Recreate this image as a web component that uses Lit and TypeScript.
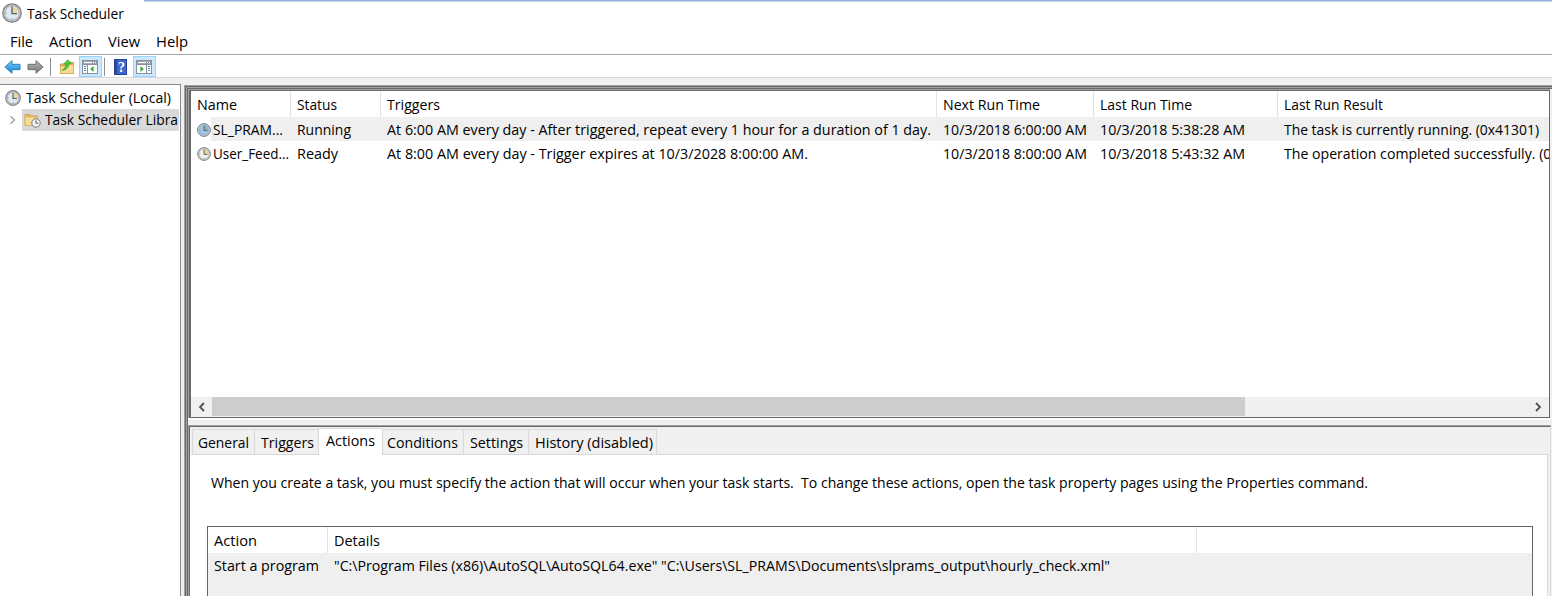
import { LitElement, html, css } from "lit";
import { customElement, property } from "lit/decorators.js";

/** Single-line label whose glyphs are condensed to a given advance width. */
@customElement("ui-label")
class UiLabel extends LitElement {
  @property({ type: Number }) w = 0;
  @property() text = "";
  static styles = css`
    :host { display: block; white-space: pre; height: 20px; line-height: 20px; flex: none; }
    .t { display: inline-block; transform-origin: 0 50%; }
  `;
  updated() {
    const t = this.renderRoot.querySelector(".t") as HTMLElement;
    t.style.transform = "none";
    const n = t.getBoundingClientRect().width;
    if (n && this.w) t.style.transform = `scaleX(${this.w / n})`;
  }
  render() {
    return html`<span class="t">${this.text}</span>`;
  }
}

const L = (text: string, w: number) => html`<ui-label .text=${text} .w=${w} style="width:${w}px"></ui-label>`;

const clock = (size: number, face = "#dfe9ef", rim = "#808285", wedge = "#ecd6a2") => html`
  <svg width=${size} height=${size} viewBox="0 0 20 20">
    <circle cx="10" cy="10" r="9.2" fill="#c6c8ca" stroke=${rim} stroke-width="1.3" />
    <circle cx="10" cy="10" r="7.2" fill=${face} stroke="#a3a8ac" stroke-width=".8" />
    <path d="M10 10V3.4A6.6 6.6 0 0 1 16.6 10Z" fill=${wedge} />
    <path d="M10 3.6V10.6H15" fill="none" stroke="#5a636b" stroke-width="1.4" />
    <path d="M10 15.2v1.4M3.5 10h1.4" stroke="#8b959c" stroke-width="1" />
  </svg>`;

const arrow = (flip: boolean, a: string, b: string, edge: string) => html`
  <svg width="17" height="16" viewBox="0 0 17 16">
    <defs>
      <linearGradient id=${flip ? "gr" : "gb"} x1="0" y1="0" x2="0" y2="1">
        <stop offset="0" stop-color=${a} /><stop offset="1" stop-color=${b} />
      </linearGradient>
    </defs>
    <path transform=${flip ? "translate(17 0) scale(-1 1)" : ""}
      d="M.9 8 8 1.700V5.300H16V10.700H8V14.300Z" fill=${`url(#${flip ? "gr" : "gb"})`} stroke=${edge} stroke-linejoin="round" />
  </svg>`;

const folderUp = html`
  <svg width="16" height="16" viewBox="0 0 16 16">
    <path d="M1.500 5H8l1-1.500H14.500V14.500H1.500Z" fill="#dcb862" stroke="#c9a14c" />
    <path d="M1.500 7H9l1.500-1.500H14.500V14.500H1.500Z" fill="#f4dc92" stroke="#d3ad58" stroke-width=".8" />
    <path d="M3 11.500C5.500 10 6.800 8 7 5H4.800L8.800 .800 12.300 4.600H10C9.800 8 7.500 11 3 11.500Z" fill="#55c63c" stroke="#36a029" stroke-width=".7" />
  </svg>`;

const paneIcon = (right: boolean) => html`
  <svg width="17" height="16" viewBox="0 0 17 16" shape-rendering="crispEdges">
    <rect x=".5" y="1.500" width="15" height="13" fill="#fff" stroke="#8a8f99" />
    <rect x="1" y="2" width="14" height="1" fill="#a3a8b0" />
    <path d="M1 3.500H15" stroke="#8a8f99" /><path d="M2 3.500H10M11 3.500h1M13 3.500h1" stroke="#fff" />
    <path d="M1 4.500H15" stroke="#a3a8b0" /><path d="M1 5.500H15" stroke="#8a8f99" />
    <path d=${right ? "M10.5 6V14" : "M5.5 6V14"} stroke="#8a8f99" />
    <path d=${right ? "M12 7.500h2M12 9.500h2M12 11.500h2" : "M2 7.500h2M2 9.500h2M2 11.500h2"} stroke="#4a79b8" />
    <path shape-rendering="auto" d=${right ? "M4.500 7 7.800 10 4.500 13Z" : "M11.500 7 8.200 10 11.500 13Z"} fill="#2fa836" />
  </svg>`;

const helpIcon = html`
  <svg width="13" height="16" viewBox="0 0 13 16">
    <rect x=".5" y=".5" width="12" height="15" fill="#3f66c8" stroke="#24429b" />
    <rect x="1" y="1" width="2" height="14" fill="#2a48a5" />
    <text x="7.500" y="13" text-anchor="middle" font-family="Liberation Serif, serif" font-weight="700" font-size="14" fill="#fff">?</text>
  </svg>`;

const folderClock = html`
  <svg width="17" height="16" viewBox="0 0 17 16">
    <path d="M1 2.500H6l1.500 1.500H13.500V13.500H1Z" fill="#e2bd66" stroke="#cda451" />
    <path d="M1 5H13.500V13.500H1Z" fill="#f8dd95" stroke="#d8b25e" stroke-width=".8" />
    <circle cx="12" cy="11" r="4.200" fill="#f2f5f6" stroke="#777c80" />
    <path d="M12 8.300V11.300H14.300" fill="none" stroke="#555d63" />
  </svg>`;

const chevron = (d: string, color: string, sw: number) => html`
  <svg width="8" height="10" viewBox="0 0 8 10"><path d=${d} fill="none" stroke=${color} stroke-width=${sw} /></svg>`;

interface Task { icon: unknown; cells: [string, number][]; selected?: boolean }

const columns: [string, number][] = [
  ["Name", 40], ["Status", 40], ["Triggers", 53], ["Next Run Time", 97], ["Last Run Time", 92], ["Last Run Result", 99],
];
const tasks: Task[] = [
  {
    icon: clock(14, "#9cc8e6", "#5c7f9b", "#8fb3b4"),
    selected: true,
    cells: [["SL_PRAM...", 70], ["Running", 54], ["At 6:00 AM every day - After triggered, repeat every 1 hour for a duration of 1 day.", 544],
      ["10/3/2018 6:00:00 AM", 144], ["10/3/2018 5:38:28 AM", 145], ["The task is currently running. (0x41301)", 255]],
  },
  {
    icon: clock(14, "#f0f0ee", "#8a8580", "#edcf92"),
    cells: [["User_Feed...", 76], ["Ready", 41], ["At 8:00 AM every day - Trigger expires at 10/3/2028 8:00:00 AM.", 421],
      ["10/3/2018 8:00:00 AM", 144], ["10/3/2018 5:43:32 AM", 145], ["The operation completed successfully. (0x0)", 287]],
  },
];
const tabs: [string, number, string][] = [
  ["General", 51, "g"], ["Triggers", 53, "t"], ["Actions", 49, "a"], ["Conditions", 71, "c"], ["Settings", 53, "s"], ["History (disabled)", 118, "h"],
];

@customElement("app-root")
class AppRoot extends LitElement {
  static styles = css`
    :host { display: block; width: 1552px; height: 596px; overflow: hidden; background: #f0f0f0; color: #000;
      font: 14.5px/20px "Open Sans", "Noto Sans", sans-serif; }
    * { box-sizing: border-box; }
    svg { display: block; flex: none; }
    .app { display: flex; flex-direction: column; height: 596px; }
    .accent { height: 2px; margin-left: 144px; background: #c4d7ee; border-top: 1px solid #91b1da; }
    .chrome { background: #fff; flex: none; }
    .title { display: flex; height: 29px; padding: 1px 0 0 2px; gap: 5px; }
    .title ui-label { margin-top: 1px; }
    .menu { display: flex; height: 24px; padding: 1px 0 0 10px; gap: 16px; border-bottom: 1px solid #a5a5a5; }
    .toolbar { display: flex; align-items: center; height: 23px; padding: 1px 0 0 4px; border-bottom: 1px solid #d9d9d9; }
    .toolbar .fwd { margin-left: 6px; }
    .sep { width: 1px; height: 18px; background: #8d8d8d; }
    .sep.one { margin: 0 8px 0 6px; }
    .sep.two { margin: 0 9px 0 2px; }
    .on { display: flex; align-items: center; justify-content: center; width: 23px; height: 21px; background: #cce8ff; border: 1px solid #99d1ff; }
    .on.left { margin-left: 4px; }
    .on.right { margin-left: 6px; }
    .body { display: flex; flex: 1; min-height: 0; padding-top: 6px; }
    .tree { width: 181px; flex: none; background: #fff; border: 1px solid #828790; border-width: 1px 1px 0 0; padding-top: 3px; overflow: hidden; }
    .root { display: flex; align-items: center; gap: 5px; height: 20px; padding-left: 5px; }
    .node { display: flex; align-items: center; height: 22px; padding-left: 9px; margin-top: 1px; }
    .sel { display: flex; align-items: center; gap: 4px; margin-left: 5px; padding-left: 2px; width: 157px; height: 22px; background: #d9d9d9; overflow: hidden; }
    .main { display: flex; flex-direction: column; flex: 1; margin: 1px 0 0 3px; min-width: 0; }
    .edge { display: flex; flex-direction: column; flex: 1; min-height: 0; border: solid #a0a0a0; border-width: 1px 0 0 1px; }
    .edge.dark { border-color: #696969; }
    .upper { border: solid #a0a0a0; border-width: 1px 0 0 1px; width: 1362px; flex: none; }
    .tasks { display: flex; flex-direction: column; height: 328px; background: #fff; border: solid #696969; border-width: 1px 1px 1px 2px; overflow: hidden; }
    .row { display: grid; grid-template-columns: 100px 90px 556px 157px 184px 400px; height: 24px; flex: none; }
    .cell { display: flex; overflow: hidden; padding: 3px 0 0 6px; min-width: 0; }
    .head { height: 26px; }
    .head .cell { border-right: 1px solid #e2e2e2; padding-top: 4px; }
    .name { gap: 2px; align-items: flex-start; }
    .name svg { margin-top: 3px; }
    .selected { background: linear-gradient(90deg, #fff 20px, #efefef 20px); }
    .fill { flex: 1; }
    .scroll { display: flex; align-items: center; justify-content: space-between; height: 20px; flex: none; background: #f0f0f0; padding-right: 7px; }
    .lbtn { display: flex; align-items: center; justify-content: center; width: 21px; }
    .thumb { width: 1033px; height: 19px; background: #cdcdcd; margin: 0 auto 1px 0; }
    .gap { height: 7px; flex: none; background: linear-gradient(#fff 2px, #f0f0f0 2px); }
    .lower { display: flex; flex: 1; min-height: 0; width: 1363px; border: solid #a0a0a0; border-width: 1px 0 0 1px; }
    .details { display: flex; flex-direction: column; flex: 1; min-height: 0; border: solid #696969; border-width: 1px 1px 0 1px; border-right-color: #dcdcdc; }
    .tabs { display: flex; height: 28px; align-items: flex-end; padding-left: 2px; flex: none; }
    .tab { display: flex; height: 26px; padding-top: 3px; border: 1px solid #d9d9d9; border-left: 0; }
    .g { width: 63px; padding-left: 5px; border-left: 1px solid #d9d9d9; }
    .t { width: 63px; padding-left: 6px; border-right: 0; }
    .a { width: 65px; height: 27px; padding-top: 2px; padding-left: 7px; background: #fff; border-left: 1px solid #d9d9d9; border-bottom: 0; }
    .c { width: 81px; padding-left: 4px; }
    .s { width: 65px; padding-left: 6px; }
    .h { width: 128px; padding-left: 6px; }
    .rest { flex: 1; height: 1px; background: #d9d9d9; margin-right: 2px; }
    .page { flex: 1; min-height: 0; background: #fff; border-right: 1px solid #d9d9d9; margin-right: 2px; padding: 18px 14px 0 17px; }
    .note { padding-left: 4px; height: 53px; }
    .list { height: 80px; border: 1px solid #646464; background: #efefef; }
    .arow { display: grid; grid-template-columns: 120px 869px 1fr; height: 26px; }
    .arow.head { background: #fff; }
    .arow.head .cell:last-child { border-right: 0; }
  `;
  render() {
    return html`<div class="app">
      <div class="chrome">
        <div class="accent"></div>
        <div class="title">${clock(20)}${L("Task Scheduler", 97)}</div>
        <div class="menu">${L("File", 23)}${L("Action", 43)}${L("View", 32)}${L("Help", 32)}</div>
        <div class="toolbar">
          ${arrow(false, "#7fd0f6", "#0d7fd0", "#2b84bf")}
          <span class="fwd">${arrow(true, "#b5b5b5", "#777", "#6e6e6e")}</span>
          <span class="sep one"></span>${folderUp}
          <span class="on left">${paneIcon(false)}</span>
          <span class="sep two"></span>${helpIcon}
          <span class="on right">${paneIcon(true)}</span>
        </div>
      </div>
      <div class="body">
        <div class="tree">
          <div class="root">${clock(16)}${L("Task Scheduler (Local)", 145)}</div>
          <div class="node">${chevron("M1.500 1.200 5.500 5 1.500 8.800", "#a0a0a0", 1.3)}
            <div class="sel">${folderClock}${L("Task Scheduler Libra", 133)}</div></div>
        </div>
        <div class="main"><div class="edge"><div class="edge dark"><div class="edge"><div class="edge dark">
          <div class="upper"><div class="tasks">
            <div class="row head">${columns.map(([t, w]) => html`<div class="cell">${L(t, w)}</div>`)}</div>
            ${tasks.map((t) => html`<div class="row ${t.selected ? "selected" : ""}">
              ${t.cells.map(([s, w], i) => html`<div class="cell ${i ? "" : "name"}">${i ? "" : t.icon}${L(s, w)}</div>`)}</div>`)}
            <div class="fill"></div>
            <div class="scroll">
              <span class="lbtn">${chevron("M6 1 2 5 6 9", "#505050", 1.8)}</span>
              <span class="thumb"></span>
              ${chevron("M2 1 6 5 2 9", "#505050", 1.8)}
            </div>
          </div></div>
          <div class="gap"></div>
          <div class="lower"><div class="details">
            <div class="tabs">${tabs.map(([t, w, c]) => html`<div class="tab ${c}">${L(t, w)}</div>`)}<div class="rest"></div></div>
            <div class="page">
              <div class="note">${L("When you create a task, you must specify the action that will occur when your task starts.  To change these actions, open the task property pages using the Properties command.", 1157)}</div>
              <div class="list">
                <div class="arow head"><div class="cell">${L("Action", 43)}</div><div class="cell">${L("Details", 46)}</div><div class="cell"></div></div>
                <div class="arow"><div class="cell">${L("Start a program", 105)}</div><div class="cell">${L('"C:\\Program Files (x86)\\AutoSQL\\AutoSQL64.exe" "C:\\Users\\SL_PRAMS\\Documents\\slprams_output\\hourly_check.xml"', 776)}</div></div>
              </div>
            </div>
          </div></div>
        </div></div></div></div></div>
      </div>
    </div>`;
  }
}
